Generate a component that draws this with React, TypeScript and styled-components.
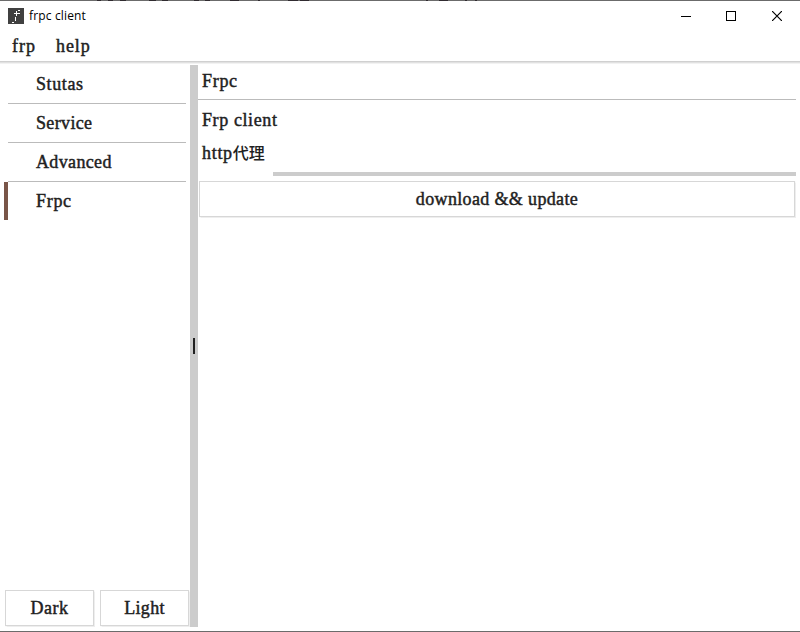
import React from "react";
import styled, { createGlobalStyle } from "styled-components";

const GlobalStyle = createGlobalStyle`
  * { box-sizing: border-box; }
  html, body { margin: 0; background: #fff; overflow: hidden; }
`;

const Window = styled.div`
  width: 800px;
  height: 632px;
  display: flex;
  flex-direction: column;
  background: #fff;
  color: #212121;
  border-bottom: 1px solid #6b6b6b;
  font-family: "Liberation Serif", "Noto Sans CJK SC", serif;
  font-size: 18px;
  -webkit-text-stroke: 0.45px #212121;
`;

const Backdrop = styled.svg`
  display: block;
  flex: none;
`;

const TitleBar = styled.header`
  height: 30px;
  flex: none;
  display: flex;
  align-items: center;
  padding-left: 8px;
`;

const Title = styled.span`
  flex: 1;
  margin-left: 5px;
  color: #000;
  font: 12px/16px "Open Sans", sans-serif;
  letter-spacing: 0.15px;
  -webkit-text-stroke: 0;
`;

const WindowButton = styled.button<{ $width: number }>`
  width: ${(p) => p.$width}px;
  height: 29px;
  padding: 0;
  border: 0;
  background: none;
  display: flex;
  align-items: center;
  justify-content: center;
`;

const MenuBar = styled.nav`
  height: 34px;
  flex: none;
  display: flex;
  gap: 20px;
  padding-left: 12px;
  line-height: 30px;
  background: linear-gradient(#fff 30px, #d0d0d0 30px, #d0d0d0 31px, #e1e1e1 31px, #e1e1e1 32px, #f2f2f2 32px, #f2f2f2 33px, #fff 33px);
`;

const Label = styled.span<{ $spacing?: number }>`
  letter-spacing: ${(p) => p.$spacing ?? 0.35}px;
  white-space: nowrap;
`;

const Body = styled.div`
  flex: 1;
  min-height: 0;
  display: flex;
  padding-bottom: 4px;
`;

const Sidebar = styled.aside`
  width: 190px;
  display: flex;
  flex-direction: column;
  justify-content: space-between;
`;

const NavItem = styled.div<{ $selected?: boolean; $last?: boolean }>`
  height: ${(p) => (p.$last ? 38 : 39)}px;
  margin: 0 4px;
  padding-left: 28px;
  line-height: 38px;
  border-left: 4px solid ${(p) => (p.$selected ? "#795548" : "transparent")};
  background: linear-gradient(#bbb, #bbb) bottom / 100% ${(p) => (p.$last ? 0 : 1)}px no-repeat;
  background-origin: padding-box;
  background-clip: padding-box;
`;

const ThemeButtons = styled.div`
  display: flex;
  gap: 6px;
  padding: 0 1px 1px 5px;
`;

const Button = styled.button`
  flex: 1;
  height: 36px;
  padding: 0;
  border: 1px solid #d7d7d7;
  background: #fff;
  box-shadow: 0 0 1px 0.5px #eee;
  color: inherit;
  font: inherit;
  -webkit-text-stroke: inherit;
`;

const Splitter = styled.div`
  width: 8px;
  flex: none;
  display: flex;
  align-items: center;
  justify-content: center;
  background: #ccc;
`;

const Grip = styled.div`
  width: 2px;
  height: 16px;
  background: #212121;
`;

const Content = styled.main`
  flex: 1;
  padding-right: 4px;
`;

const Heading = styled.div`
  height: 35px;
  padding-left: 4px;
  line-height: 32px;
  border-bottom: 1px solid #bbb;
`;

const Subtitle = styled.div`
  height: 37px;
  padding-left: 4px;
  line-height: 40px;
`;

const Field = styled.div`
  height: 40px;
  display: flex;
`;

const FieldName = styled.div`
  width: 75px;
  height: 34px;
  padding-left: 4px;
  line-height: 32px;
`;

const Han = styled.span`
  font: 500 16px/30px "Noto Sans CJK SC", sans-serif;
  letter-spacing: 0;
  -webkit-text-stroke: 0;
`;

const Input = styled.div`
  flex: 1;
  height: 39px;
  border-bottom: 4px solid #ccc;
`;

const Action = styled.div`
  display: flex;
  margin: 4px 1px 0;
`;

const pages = [
  { name: "Stutas", spacing: 0.6 },
  { name: "Service", spacing: 0.35 },
  { name: "Advanced", spacing: 0.35 },
  { name: "Frpc", spacing: 0.7 },
];

const patches = [
  [97, 4], [108, 5], [120, 6], [149, 7], [162, 6], [194, 5], [205, 5], [230, 9], [258, 2], [288, 10], [300, 9], [426, 2], [439, 9], [465, 2], [475, 2],
];

export default function App() {
  return (
    <>
      <GlobalStyle />
      <Window>
        <Backdrop width="800" height="1">
          <rect width="800" height="1" fill="#6b6b6b" />
          {patches.map(([x, w]) => <rect key={x} x={x} width={w} height="1" fill="#302b30" />)}
        </Backdrop>
        <TitleBar>
          <svg width="16" height="16" shapeRendering="crispEdges">
            <rect width="16" height="16" fill="#404040" />
            <path d="M10 2.5h2M8.5 3v5M6 5.5h6M7.5 9v4M4 14.5h2" stroke="#fff" fill="none" />
          </svg>
          <Title>frpc client</Title>
          <WindowButton $width={44} aria-label="Minimize">
            <svg width="10" height="10" shapeRendering="crispEdges"><path d="M0 5.5h10" stroke="#000" /></svg>
          </WindowButton>
          <WindowButton $width={46} aria-label="Maximize">
            <svg width="10" height="10" shapeRendering="crispEdges"><rect x=".5" y=".5" width="9" height="9" fill="none" stroke="#000" /></svg>
          </WindowButton>
          <WindowButton $width={46} aria-label="Close">
            <svg width="10" height="10"><path d="M0 0 10 10M10 0 0 10" stroke="#000" strokeWidth="1.2" /></svg>
          </WindowButton>
        </TitleBar>
        <MenuBar>
          <Label $spacing={1}>frp</Label>
          <Label $spacing={0.9}>help</Label>
        </MenuBar>
        <Body>
          <Sidebar>
            <div>
              {pages.map((p, i) => (
                <NavItem key={p.name} $selected={p.name === "Frpc"} $last={i === pages.length - 1}>
                  <Label $spacing={p.spacing}>{p.name}</Label>
                </NavItem>
              ))}
            </div>
            <ThemeButtons>
              <Button><Label $spacing={0.55}>Dark</Label></Button>
              <Button><Label>Light</Label></Button>
            </ThemeButtons>
          </Sidebar>
          <Splitter><Grip /></Splitter>
          <Content>
            <Heading><Label $spacing={0.7}>Frpc</Label></Heading>
            <Subtitle><Label $spacing={0.6}>Frp client</Label></Subtitle>
            <Field>
              <FieldName><Label $spacing={0.7}>http</Label><Han>代理</Han></FieldName>
              <Input />
            </Field>
            <Action><Button><Label>download &amp;&amp; update</Label></Button></Action>
          </Content>
        </Body>
      </Window>
    </>
  );
}
